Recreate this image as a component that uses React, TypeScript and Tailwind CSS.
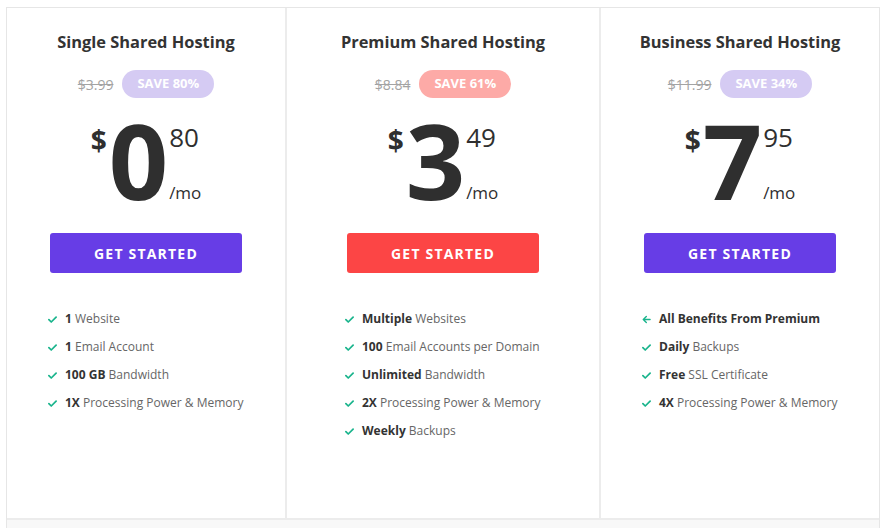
// Shared hosting pricing table — three plans side by side
const font = { fontFamily: '"Open Sans", "Liberation Sans", sans-serif' };

interface Feature {
  bold: string;
  rest: string;
  arrow?: boolean;
}

interface Plan {
  title: string;
  oldPrice: string;
  save: string;
  badge: string;
  whole: string;
  cents: string;
  button: string;
  features: Feature[];
}

const plans: Plan[] = [
  {
    title: 'Single Shared Hosting',
    oldPrice: '$3.99',
    save: 'SAVE 80%',
    badge: 'bg-[#d5cbf3]',
    whole: '0',
    cents: '80',
    button: 'bg-[#673de6]',
    features: [
      { bold: '1', rest: ' Website' },
      { bold: '1', rest: ' Email Account' },
      { bold: '100 GB', rest: ' Bandwidth' },
      { bold: '1X', rest: ' Processing Power & Memory' },
    ],
  },
  {
    title: 'Premium Shared Hosting',
    oldPrice: '$8.84',
    save: 'SAVE 61%',
    badge: 'bg-[#fdaaa7]',
    whole: '3',
    cents: '49',
    button: 'bg-[#fc4545]',
    features: [
      { bold: 'Multiple', rest: ' Websites' },
      { bold: '100', rest: ' Email Accounts per Domain' },
      { bold: 'Unlimited', rest: ' Bandwidth' },
      { bold: '2X', rest: ' Processing Power & Memory' },
      { bold: 'Weekly', rest: ' Backups' },
    ],
  },
  {
    title: 'Business Shared Hosting',
    oldPrice: '$11.99',
    save: 'SAVE 34%',
    badge: 'bg-[#d5cbf3]',
    whole: '7',
    cents: '95',
    button: 'bg-[#673de6]',
    features: [
      { bold: 'All Benefits From Premium', rest: '', arrow: true },
      { bold: 'Daily', rest: ' Backups' },
      { bold: 'Free', rest: ' SSL Certificate' },
      { bold: '4X', rest: ' Processing Power & Memory' },
    ],
  },
];

function Check() {
  return (
    <svg viewBox="0 0 10 10" className="w-[9px] h-[9px] shrink-0">
      <path d="M1 5.2l2.6 2.6L9 2.4" fill="none" stroke="#19b48c" strokeWidth="1.9" strokeLinecap="round" strokeLinejoin="round" />
    </svg>
  );
}

function ArrowLeft() {
  return (
    <svg viewBox="0 0 10 10" className="w-[9px] h-[9px] shrink-0">
      <path d="M9 5H1.6M4.8 1.6L1.4 5l3.4 3.4" fill="none" stroke="#19b48c" strokeWidth="1.5" strokeLinecap="round" strokeLinejoin="round" />
    </svg>
  );
}

function PlanColumn({ plan, className }: { plan: Plan; className: string }) {
  return (
    <div className={`flex flex-col items-center pt-[22px] ${className}`}>
      <h3 className="text-[16.4px] leading-[24px] font-bold text-[#333333]">{plan.title}</h3>

      {/* old price + saving badge */}
      <div className="mt-[16px] flex items-center gap-[9px]">
        <span className="text-[14px] text-[#a3a3a3] line-through">{plan.oldPrice}</span>
        <span className={`h-[28px] px-[15px] rounded-full flex items-center text-[13px] font-bold text-white ${plan.badge}`}>
          {plan.save}
        </span>
      </div>

      {/* price */}
      <div className="mt-[10px] flex items-start h-[104px] text-[#2f2f2f]">
        <span className="mt-[18px] text-[28px] leading-none font-bold">$</span>
        <span className="text-[104px] leading-none font-bold tracking-[-2px] ml-[2px]">{plan.whole}</span>
        <div className="flex flex-col pt-[16px] ml-[3px]">
          <span className="text-[26px] leading-none">{plan.cents}</span>
          <span className="mt-[34px] text-[17px] leading-none">/mo</span>
        </div>
      </div>

      <div className="mt-[21px] w-[192px]">
        <button className={`w-full h-[40px] rounded-[3px] text-white text-[14px] font-bold tracking-[1.2px] ${plan.button}`}>
          GET STARTED
        </button>

        <ul className="mt-[32px] -ml-[2px]">
          {plan.features.map((f) => (
            <li key={f.bold + f.rest} className="flex items-center gap-[8px] h-[28px] text-[12px] text-[#666666]">
              {f.arrow ? <ArrowLeft /> : <Check />}
              <span className="whitespace-nowrap">
                <b className="font-bold text-[#333333]">{f.bold}</b>
                {f.rest}
              </span>
            </li>
          ))}
        </ul>
      </div>
    </div>
  );
}

export default function App() {
  return (
    <div className="w-[894px] h-[528px] bg-white overflow-hidden" style={font}>
      <div className="ml-[6px] mt-[7px] w-[874px] border border-[#e6e6e6]">
        <div className="grid grid-cols-[280px_314px_278px] h-[510px]">
          <PlanColumn plan={plans[0]} className="border-r-2 border-[#ececec]" />
          <PlanColumn plan={plans[1]} className="border-r-2 border-[#ececec]" />
          <PlanColumn plan={plans[2]} className="" />
        </div>
        <div className="h-[20px] bg-[#f8f8f8] border-t-2 border-[#ececec]" />
      </div>
    </div>
  );
}
